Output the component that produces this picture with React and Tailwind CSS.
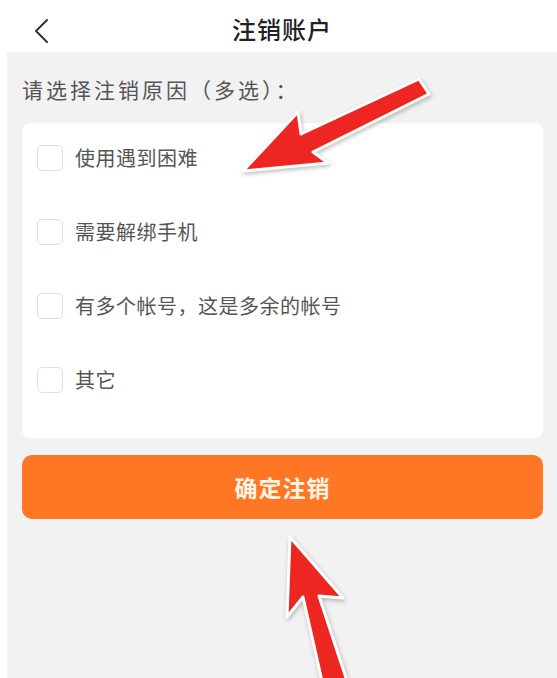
import { useState } from 'react';

const reasons = ['使用遇到困难', '需要解绑手机', '有多个帐号，这是多余的帐号', '其它'];

const Arrows = () => (
  <svg
    className="absolute inset-0 pointer-events-none"
    width="557"
    height="678"
    viewBox="0 0 557 678"
    style={{ filter: 'drop-shadow(1px 2px 2px rgba(0,0,0,0.25))' }}
  >
    <polygon
      points="243,171 298,112 301,134 419,79 429,94 313,152 328,163"
      fill="#ee2622"
      stroke="#ffffff"
      strokeWidth="3"
      strokeLinejoin="round"
    />
    <polygon
      points="290,537 343,598 319,596 350,690 324,690 303,597 287,617"
      fill="#ee2622"
      stroke="#ffffff"
      strokeWidth="3"
      strokeLinejoin="round"
    />
  </svg>
);

export default function App() {
  const [checked, setChecked] = useState([]);

  const toggle = (i) =>
    setChecked((c) => (c.includes(i) ? c.filter((x) => x !== i) : [...c, i]));

  return (
    <div
      className="relative w-[557px] h-[678px] overflow-hidden bg-white flex"
      style={{ fontFamily: '"Noto Sans CJK SC", "Noto Sans", sans-serif' }}
    >
      <div className="w-[7px] bg-white" />
      <div className="flex-1 flex flex-col">
        <header className="h-[52px] pt-[6px] bg-white relative flex items-center justify-center">
          <svg className="absolute left-[24px] top-[17px]" width="22" height="28" viewBox="0 0 22 28">
            <path d="M16 3 L5 14 L16 25" fill="none" stroke="#333" strokeWidth="2" strokeLinecap="round" strokeLinejoin="round" />
          </svg>
          <h1 className="text-[24px] leading-none text-[#222] font-medium tracking-[1px]">注销账户</h1>
        </header>

        <main className="flex-1 bg-[#f2f2f2] pl-[15px] pr-[14px] pt-[22px]">
          <p className="text-[21px] leading-[30px] text-[#555] tracking-[3px]">请选择注销原因（多选）：</p>

          <div className="mt-[19px] bg-white rounded-[8px] flex flex-col gap-[4px] pb-[23px]">
            {reasons.map((r, i) => (
              <label key={r} className="h-[70px] flex items-center cursor-pointer" onClick={() => toggle(i)}>
                <span
                  className={`ml-[15px] w-[26px] h-[26px] rounded-[5px] border-[1.5px] border-[#dedede] ${
                    checked.includes(i) ? 'bg-[#ff7624]' : 'bg-white'
                  }`}
                />
                <span className="ml-[12px] text-[20px] text-[#555] leading-none tracking-[0.5px]">{r}</span>
              </label>
            ))}
          </div>

          <button className="mt-[17px] w-full h-[64px] rounded-[10px] bg-[#ff7624] text-[#fff6e6] text-[23px] font-bold tracking-[1px] flex items-center justify-center">
            确定注销
          </button>
        </main>
      </div>
      <Arrows />
    </div>
  );
}
